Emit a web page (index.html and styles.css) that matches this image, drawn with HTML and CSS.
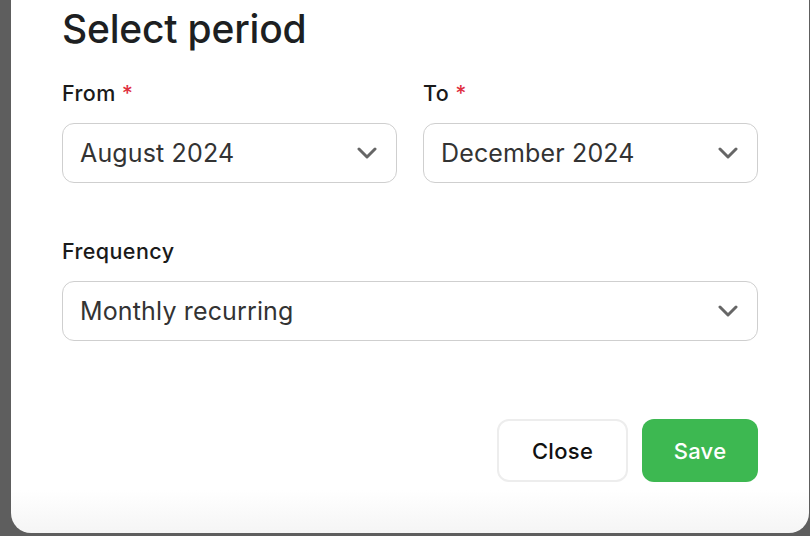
FILE: index.html
```html
<!DOCTYPE html>
<html>
<head>
<meta charset="utf-8">
<link rel="stylesheet" href="styles.css">
</head>
<body>
<div class="modal">
  <h1 class="title">Select period</h1>
  <div class="row">
    <div class="field">
      <label class="label">From <span class="req">*</span></label>
      <div class="select">
        <span class="value">August 2024</span>
        <svg class="chev" viewBox="0 0 20 12" width="20" height="12"><path d="M2 2 L10 10 L18 2" fill="none" stroke="#666" stroke-width="3" stroke-linecap="round" stroke-linejoin="round"/></svg>
      </div>
    </div>
    <div class="field">
      <label class="label">To <span class="req">*</span></label>
      <div class="select">
        <span class="value">December 2024</span>
        <svg class="chev" viewBox="0 0 20 12" width="20" height="12"><path d="M2 2 L10 10 L18 2" fill="none" stroke="#666" stroke-width="3" stroke-linecap="round" stroke-linejoin="round"/></svg>
      </div>
    </div>
  </div>
  <div class="field freq">
    <label class="label">Frequency</label>
    <div class="select">
      <span class="value">Monthly recurring</span>
      <svg class="chev" viewBox="0 0 20 12" width="20" height="12"><path d="M2 2 L10 10 L18 2" fill="none" stroke="#666" stroke-width="3" stroke-linecap="round" stroke-linejoin="round"/></svg>
    </div>
  </div>
  <div class="actions">
    <button class="btn btn-close">Close</button>
    <button class="btn btn-save">Save</button>
  </div>
</div>
</body>
</html>
```
FILE: styles.css
```css
html, body {
  margin: 0;
  padding: 0;
  height: 100%;
  overflow: hidden;
}
body {
  background: #5e5e5e;
  font-family: Inter, "Noto Sans", sans-serif;
  display: flex;
  align-items: flex-end;
}
.modal {
  box-sizing: border-box;
  margin: 0 1px 3px 11px;
  width: 798px;
  height: 533px;
  background: linear-gradient(to bottom, #ffffff 0, #ffffff 92%, #f5f5f5 100%);
  border-radius: 0 0 20px 20px;
  padding: 5px 51px 0 51px;
  display: flex;
  flex-direction: column;
}
.title {
  margin: 0;
  font-size: 39px;
  font-weight: 500;
  color: #1d1f22;
  line-height: 48px;
  letter-spacing: -0.2px;
}
.row {
  display: flex;
  gap: 26px;
  margin-top: 28px;
}
.field {
  flex: 1;
  display: flex;
  flex-direction: column;
}
.label {
  font-size: 21.5px;
  font-weight: 500;
  color: #1a1a1a;
  line-height: 24px;
  letter-spacing: 0.4px;
  margin-bottom: 18px;
}
.req {
  color: #e0303f;
}
.select {
  box-sizing: border-box;
  height: 60px;
  border: 1px solid #cfcfcf;
  border-radius: 12px;
  display: flex;
  align-items: center;
  justify-content: space-between;
  padding: 0 19px 0 17px;
}
.value {
  font-size: 25px;
  color: #333;
  letter-spacing: 0.15px;
}
.freq {
  flex: none;
  margin-top: 56px;
}
.actions {
  display: flex;
  justify-content: flex-end;
  gap: 14px;
  margin-top: 78px;
}
.btn {
  font-family: Inter, "Noto Sans", sans-serif;
  font-size: 22px;
  font-weight: 500;
  letter-spacing: 0.3px;
  height: 63px;
  border-radius: 12px;
}
.btn-close {
  width: 131px;
  background: #fff;
  border: 2px solid #ededed;
  color: #111;
}
.btn-save {
  width: 116px;
  background: #3db851;
  border: none;
  color: #fff;
}
```
